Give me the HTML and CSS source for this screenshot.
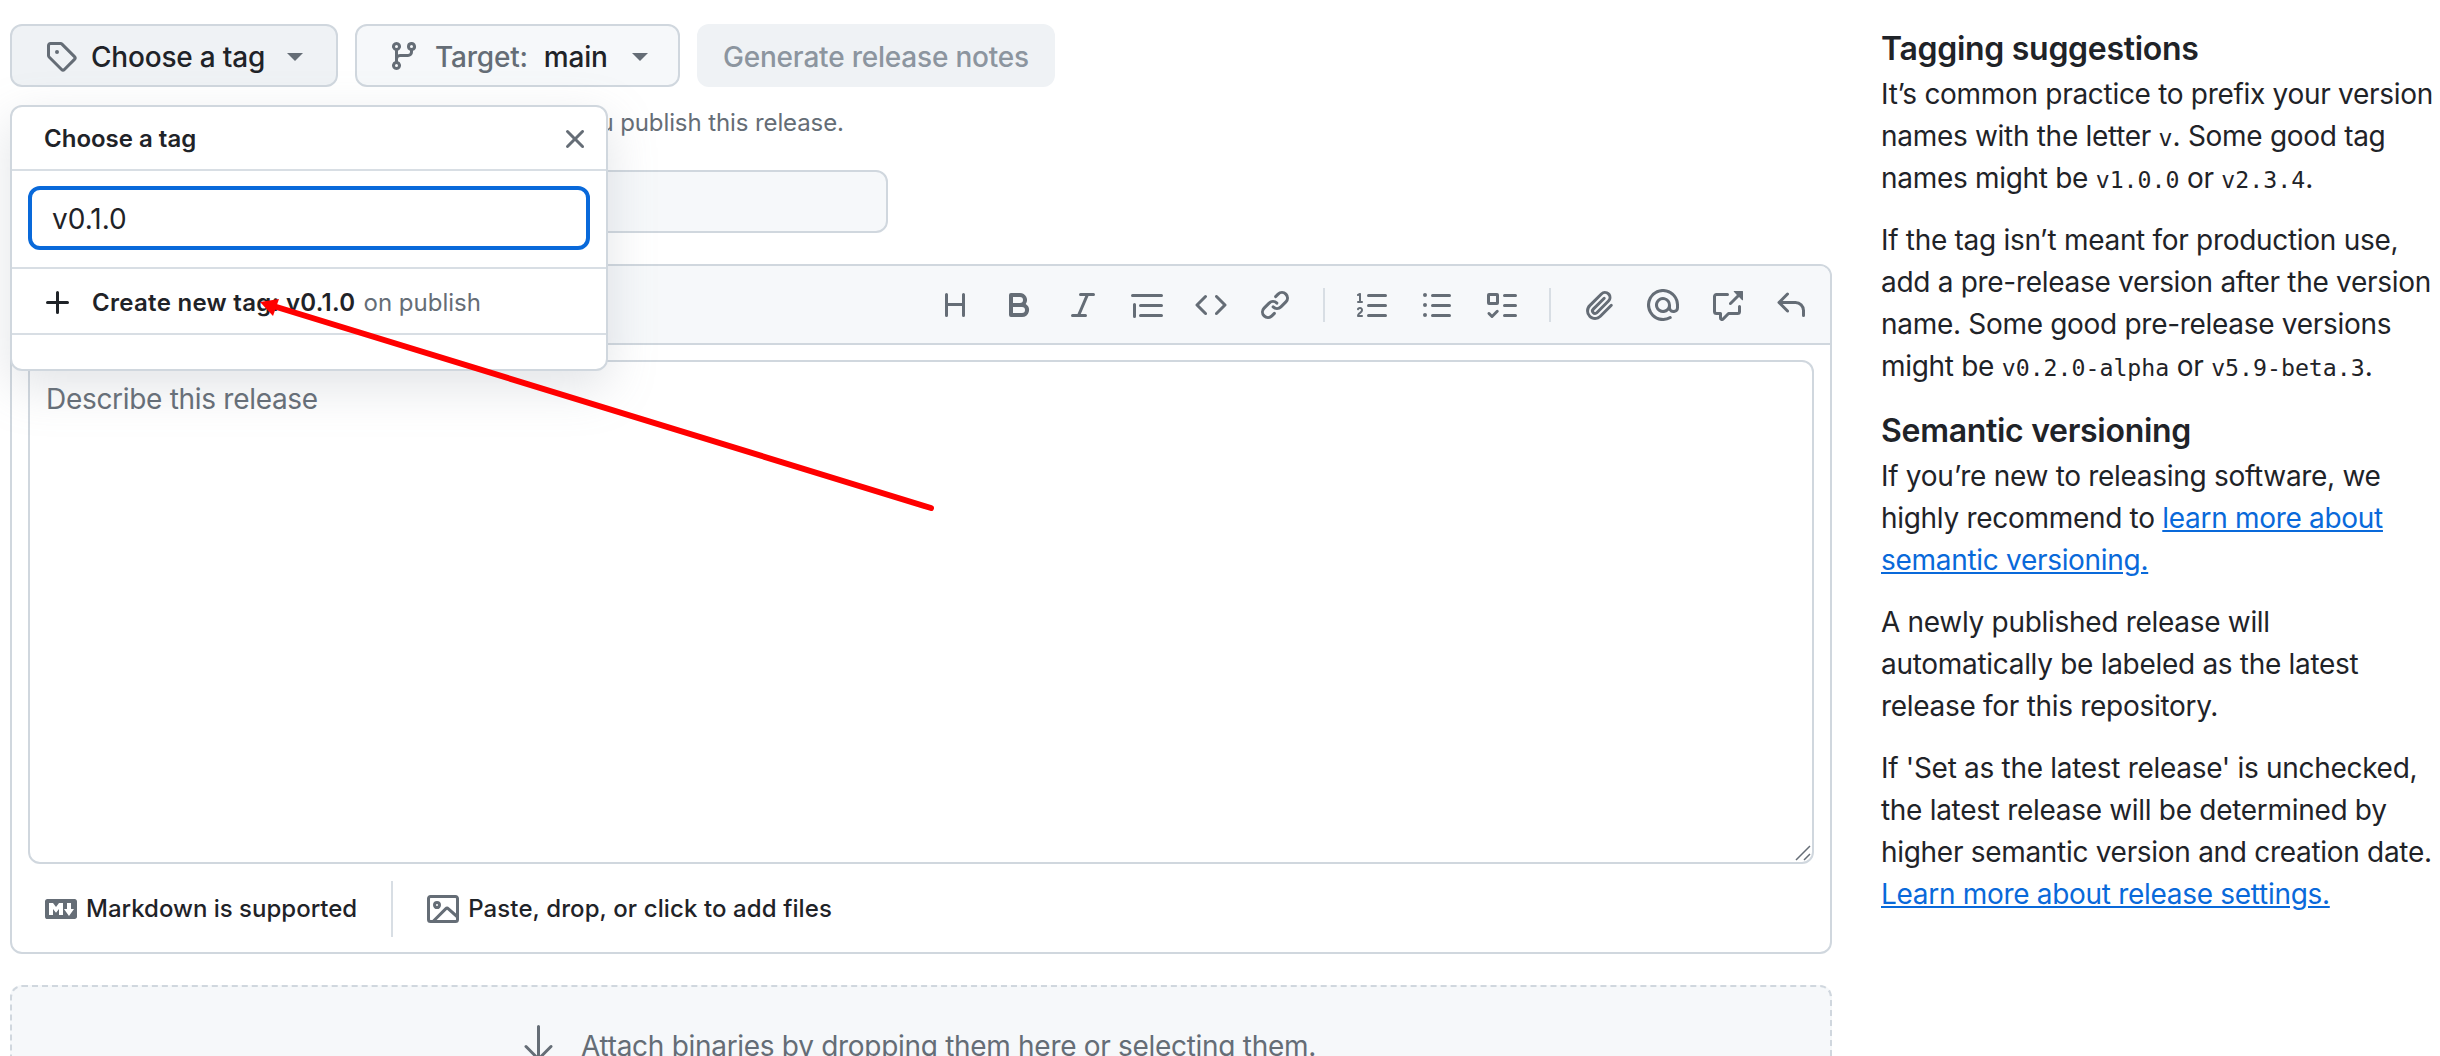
FILE: index.html
```html
<!DOCTYPE html>
<html lang="en">
<head>
    <meta charset="UTF-8">
    <title>New release</title>
    <link rel="stylesheet" href="styles.css">
</head>
<body>
    <div class="page">
        <main class="main">
            <div class="top-row">
                <button class="btn btn-open">
                    <svg class="icon tag-icon" viewBox="0 0 16 16"><path d="M1 7.775V2.75C1 1.784 1.784 1 2.75 1h5.025c.464 0 .91.184 1.238.513l6.25 6.25a1.75 1.75 0 0 1 0 2.474l-5.026 5.026a1.75 1.75 0 0 1-2.474 0l-6.25-6.25A1.752 1.752 0 0 1 1 7.775Zm1.5 0c0 .066.026.13.073.177l6.25 6.25a.25.25 0 0 0 .354 0l5.025-5.025a.25.25 0 0 0 0-.354l-6.25-6.25a.25.25 0 0 0-.177-.073H2.75a.25.25 0 0 0-.25.25ZM6 5a1 1 0 1 1 0 2 1 1 0 0 1 0-2Z"/></svg>
                    <span class="btn-text">Choose a tag</span>
                    <span class="caret"></span>
                </button>
                <button class="btn btn-target">
                    <svg class="icon" viewBox="0 0 16 16"><path d="M9.5 3.25a2.25 2.25 0 1 1 3 2.122V6A2.5 2.5 0 0 1 10 8.5H6a1 1 0 0 0-1 1v1.128a2.251 2.251 0 1 1-1.5 0V5.372a2.25 2.25 0 1 1 1.5 0v1.836A2.493 2.493 0 0 1 6 7h4a1 1 0 0 0 1-1v-.628A2.25 2.25 0 0 1 9.5 3.25Zm-6 0a.75.75 0 1 0 1.5 0 .75.75 0 0 0-1.5 0Zm8.25-.75a.75.75 0 1 0 0 1.5.75.75 0 0 0 0-1.5ZM4.25 12a.75.75 0 1 0 0 1.5.75.75 0 0 0 0-1.5Z"/></svg>
                    <span class="muted-label">Target:</span>
                    <span class="btn-text">main</span>
                    <span class="caret"></span>
                </button>
                <button class="btn btn-disabled">Generate release notes</button>
            </div>

            <p class="hint">Choose an existing tag, or create a new tag when you publish this release.</p>

            <div class="title-input"></div>

            <div class="editor">
                <div class="toolbar">
                    <svg class="icon" viewBox="0 0 16 16"><path d="M3.75 2a.75.75 0 0 1 .75.75V7h7V2.75a.75.75 0 0 1 1.5 0v10.5a.75.75 0 0 1-1.5 0V8.5h-7v4.75a.75.75 0 0 1-1.5 0V2.75A.75.75 0 0 1 3.75 2Z"/></svg>
                    <svg class="icon" viewBox="0 0 16 16"><path d="M4 2h4.5a3.501 3.501 0 0 1 2.852 5.53A3.499 3.499 0 0 1 9.5 14H4a1 1 0 0 1-1-1V3a1 1 0 0 1 1-1Zm1 7v3h4.5a1.5 1.5 0 0 0 0-3Zm3.5-2a1.5 1.5 0 0 0 0-3H5v3Z"/></svg>
                    <svg class="icon" viewBox="0 0 16 16"><path d="M6 2.75A.75.75 0 0 1 6.75 2h6.5a.75.75 0 0 1 0 1.5h-2.505l-3.858 9H9.25a.75.75 0 0 1 0 1.5h-6.5a.75.75 0 0 1 0-1.5h2.505l3.858-9H6.75A.75.75 0 0 1 6 2.75Z"/></svg>
                    <svg class="icon" viewBox="0 0 16 16"><path d="M.75 2.5h14.5a.75.75 0 0 1 0 1.5H.75a.75.75 0 0 1 0-1.5Zm4 5h10.5a.75.75 0 0 1 0 1.5H4.75a.75.75 0 0 1 0-1.5Zm0 5h10.5a.75.75 0 0 1 0 1.5H4.75a.75.75 0 0 1 0-1.5ZM2.5 7.75v6a.75.75 0 0 1-1.5 0v-6a.75.75 0 0 1 1.5 0Z"/></svg>
                    <svg class="icon" viewBox="0 0 16 16"><path d="m11.28 3.22 4.25 4.25a.75.75 0 0 1 0 1.06l-4.25 4.25a.749.749 0 0 1-1.275-.326.749.749 0 0 1 .215-.734L13.94 8l-3.72-3.72a.749.749 0 0 1 .326-1.275.749.749 0 0 1 .734.215Zm-6.56 0a.751.751 0 0 1 1.042.018.751.751 0 0 1 .018 1.042L2.06 8l3.72 3.72a.749.749 0 0 1-.326 1.275.749.749 0 0 1-.734-.215L.47 8.53a.75.75 0 0 1 0-1.06Z"/></svg>
                    <svg class="icon" viewBox="0 0 16 16"><path d="m7.775 3.275 1.25-1.25a3.5 3.5 0 1 1 4.95 4.95l-2.5 2.5a3.5 3.5 0 0 1-4.95 0 .751.751 0 0 1 .018-1.042.751.751 0 0 1 1.042-.018 1.998 1.998 0 0 0 2.83 0l2.5-2.5a2.002 2.002 0 0 0-2.83-2.83l-1.25 1.25a.751.751 0 0 1-1.042-.018.751.751 0 0 1-.018-1.042Zm-4.69 9.64a1.998 1.998 0 0 0 2.83 0l1.25-1.25a.751.751 0 0 1 1.042.018.751.751 0 0 1 .018 1.042l-1.25 1.25a3.5 3.5 0 1 1-4.95-4.95l2.5-2.5a3.5 3.5 0 0 1 4.95 0 .751.751 0 0 1-.018 1.042.751.751 0 0 1-1.042.018 1.998 1.998 0 0 0-2.83 0l-2.5 2.5a1.998 1.998 0 0 0 0 2.83Z"/></svg>
                    <span class="toolbar-sep"></span>
                    <svg class="icon" viewBox="0 0 16 16"><path d="M5 3.25a.75.75 0 0 1 .75-.75h8.5a.75.75 0 0 1 0 1.5h-8.5A.75.75 0 0 1 5 3.25Zm0 5a.75.75 0 0 1 .75-.75h8.5a.75.75 0 0 1 0 1.5h-8.5A.75.75 0 0 1 5 8.25Zm0 5a.75.75 0 0 1 .75-.75h8.5a.75.75 0 0 1 0 1.5h-8.5a.75.75 0 0 1-.75-.75ZM.924 10.32a.5.5 0 0 1-.851-.525l.001-.001.001-.002.002-.004.007-.011c.097-.144.215-.273.348-.384.228-.19.588-.392 1.068-.392.468 0 .858.181 1.126.484.259.294.377.673.377 1.038 0 .987-.686 1.495-1.156 1.845l-.047.035c-.303.225-.522.4-.654.597h1.357a.5.5 0 0 1 0 1H.5a.5.5 0 0 1-.5-.5c0-1.005.692-1.52 1.167-1.875l.035-.025c.531-.396.8-.625.8-1.078a.57.57 0 0 0-.128-.376C1.806 10.068 1.695 10 1.5 10a.658.658 0 0 0-.429.163.835.835 0 0 0-.144.153ZM2.003 2.5V6h.503a.5.5 0 0 1 0 1H.5a.5.5 0 0 1 0-1h.503V3.308l-.28.14a.5.5 0 0 1-.446-.895l1.003-.5a.5.5 0 0 1 .723.447Z"/></svg>
                    <svg class="icon" viewBox="0 0 16 16"><path d="M5.75 2.5h8.5a.75.75 0 0 1 0 1.5h-8.5a.75.75 0 0 1 0-1.5Zm0 5h8.5a.75.75 0 0 1 0 1.5h-8.5a.75.75 0 0 1 0-1.5Zm0 5h8.5a.75.75 0 0 1 0 1.5h-8.5a.75.75 0 0 1 0-1.5ZM2 14a1 1 0 1 1 0-2 1 1 0 0 1 0 2Zm1-6a1 1 0 1 1-2 0 1 1 0 0 1 2 0ZM2 4a1 1 0 1 1 0-2 1 1 0 0 1 0 2Z"/></svg>
                    <svg class="icon" viewBox="0 0 16 16"><path d="M2 2h4a1 1 0 0 1 1 1v4a1 1 0 0 1-1 1H2a1 1 0 0 1-1-1V3a1 1 0 0 1 1-1Zm4.655 8.595a.75.75 0 0 1 0 1.06L4.03 14.28a.75.75 0 0 1-1.06 0l-1.5-1.5a.749.749 0 0 1 .326-1.275.749.749 0 0 1 .734.215l.97.97 2.095-2.095a.75.75 0 0 1 1.06 0ZM9.75 2.5h5.5a.75.75 0 0 1 0 1.5h-5.5a.75.75 0 0 1 0-1.5Zm0 5h5.5a.75.75 0 0 1 0 1.5h-5.5a.75.75 0 0 1 0-1.5Zm0 5h5.5a.75.75 0 0 1 0 1.5h-5.5a.75.75 0 0 1 0-1.5Zm-7.25-9v3h3v-3Z"/></svg>
                    <span class="toolbar-sep"></span>
                    <svg class="icon" viewBox="0 0 16 16"><path d="M12.212 3.02a1.753 1.753 0 0 0-2.478.003l-5.83 5.83a3.007 3.007 0 0 0-.88 2.127c0 .795.315 1.551.88 2.116.567.567 1.333.89 2.126.89.79 0 1.548-.321 2.116-.89l5.48-5.48a.75.75 0 0 1 1.061 1.06l-5.48 5.48a4.492 4.492 0 0 1-3.177 1.33c-1.2 0-2.345-.487-3.187-1.33a4.483 4.483 0 0 1-1.32-3.177c0-1.195.475-2.341 1.32-3.186l5.83-5.83a3.25 3.25 0 0 1 5.553 2.297c0 .863-.343 1.691-.953 2.301L7.439 12.39c-.375.377-.884.59-1.416.593a1.998 1.998 0 0 1-1.412-.593 1.992 1.992 0 0 1 0-2.828l5.48-5.48a.751.751 0 0 1 1.042.018.751.751 0 0 1 .018 1.042l-5.48 5.48a.492.492 0 0 0 0 .707.499.499 0 0 0 .352.154.51.51 0 0 0 .356-.154l5.833-5.827a1.755 1.755 0 0 0 0-2.481Z"/></svg>
                    <svg class="icon" viewBox="0 0 16 16"><path d="M4.75 2.37a6.501 6.501 0 0 0 6.5 11.26.75.75 0 0 1 .75 1.298A7.999 7.999 0 0 1 .989 4.148 8 8 0 0 1 16 7.75v1.5a2.75 2.75 0 0 1-5.072 1.475 3.999 3.999 0 0 1-6.65-4.19A4 4 0 0 1 12 8v1.25a1.25 1.25 0 0 0 2.5 0V7.867a6.5 6.5 0 0 0-9.75-5.496ZM10.5 8a2.5 2.5 0 1 0-5 0 2.5 2.5 0 0 0 5 0Z"/></svg>
                    <svg class="icon" viewBox="0 0 16 16"><path d="M2.75 3.5a.25.25 0 0 0-.25.25v7.5c0 .138.112.25.25.25h2a.75.75 0 0 1 .75.75v2.19l2.72-2.72a.747.747 0 0 1 .53-.22h4.5a.25.25 0 0 0 .25-.25v-2.5a.75.75 0 0 1 1.5 0v2.5A1.75 1.75 0 0 1 13.25 13H9.06l-2.573 2.573A1.458 1.458 0 0 1 4 14.543V13H2.75A1.75 1.75 0 0 1 1 11.25v-7.5C1 2.784 1.784 2 2.75 2h5.5a.75.75 0 0 1 0 1.5ZM16 1.25v4.146a.25.25 0 0 1-.427.177L14.03 4.03l-3.75 3.75a.749.749 0 0 1-1.275-.326.749.749 0 0 1 .215-.734l3.75-3.75-1.543-1.543A.25.25 0 0 1 11.604 1h4.146a.25.25 0 0 1 .25.25Z"/></svg>
                    <svg class="icon" viewBox="0 0 16 16"><path d="M6.78 1.97a.75.75 0 0 1 0 1.06L3.81 6h6.44A4.75 4.75 0 0 1 15 10.75v2.5a.75.75 0 0 1-1.5 0v-2.5a3.25 3.25 0 0 0-3.25-3.25H3.81l2.97 2.97a.749.749 0 0 1-.326 1.275.749.749 0 0 1-.734-.215L1.47 7.28a.75.75 0 0 1 0-1.06l4.25-4.25a.75.75 0 0 1 1.06 0Z"/></svg>
                </div>

                <div class="textarea">
                    <span class="placeholder">Describe this release</span>
                    <svg class="resize-grip" viewBox="0 0 16 16"><path d="M1 15 15 1M9 15l6-6" fill="none" stroke="#656d76" stroke-width="1.5"/></svg>
                </div>

                <div class="editor-footer">
                    <span class="footer-item footer-md">
                        <svg class="icon" viewBox="0 0 16 16"><path d="M14.85 3c.63 0 1.15.52 1.14 1.15v7.7c0 .63-.51 1.15-1.15 1.15H1.15C.52 13 0 12.48 0 11.84V4.15C0 3.52.52 3 1.15 3ZM9 11V5H7L5.5 7 4 5H2v6h2V8l1.5 1.92L7 8v3Zm2.99.5L14.5 8H13V5h-2v3H9.5Z"/></svg>
                        Markdown is supported
                    </span>
                    <span class="footer-sep"></span>
                    <span class="footer-item">
                        <svg class="icon" viewBox="0 0 16 16"><path d="M16 13.25A1.75 1.75 0 0 1 14.25 15H1.75A1.75 1.75 0 0 1 0 13.25V2.75C0 1.784.784 1 1.75 1h12.5c.966 0 1.75.784 1.75 1.75ZM1.75 2.5a.25.25 0 0 0-.25.25v10.5c0 .138.112.25.25.25h.94l.03-.03 6.077-6.078a1.75 1.75 0 0 1 2.412-.06L14.5 10.31V2.75a.25.25 0 0 0-.25-.25Zm12.5 11a.25.25 0 0 0 .25-.25v-.917l-4.298-3.889a.25.25 0 0 0-.344.008L4.81 13.5ZM7 6a2 2 0 1 1-3.999.001A2 2 0 0 1 7 6ZM5.5 6a.5.5 0 1 0-1 0 .5.5 0 0 0 1 0Z"/></svg>
                        <span class="paste-text">Paste, drop, or click to add files</span>
                    </span>
                </div>
            </div>

            <div class="dropzone">
                <svg class="icon arrow-icon" viewBox="0 0 24 24"><path d="M4.97 13.22a.75.75 0 0 1 1.06 0L11 18.19V3.75a.75.75 0 0 1 1.5 0v14.44l4.97-4.97a.749.749 0 0 1 1.275.326.749.749 0 0 1-.215.734l-6.25 6.25a.75.75 0 0 1-1.06 0l-6.25-6.25a.75.75 0 0 1 0-1.06Z"/></svg>
                <span class="dropzone-text">Attach binaries by dropping them here or selecting them.</span>
            </div>

            <!-- tag picker, open over the form -->
            <div class="popover">
                <div class="popover-head">
                    <span>Choose a tag</span>
                    <svg class="icon" viewBox="0 0 16 16"><path d="M3.72 3.72a.75.75 0 0 1 1.06 0L8 6.94l3.22-3.22a.749.749 0 0 1 1.275.326.749.749 0 0 1-.215.734L9.06 8l3.22 3.22a.749.749 0 0 1-.326 1.275.749.749 0 0 1-.734-.215L8 9.06l-3.22 3.22a.751.751 0 0 1-1.042-.018.751.751 0 0 1-.018-1.042L6.94 8 3.72 4.78a.75.75 0 0 1 0-1.06Z"/></svg>
                </div>
                <div class="popover-filter">
                    <div class="filter-input">v0.1.0</div>
                </div>
                <div class="popover-item">
                    <svg class="icon plus-icon" viewBox="0 0 16 16"><path d="M7.75 2a.75.75 0 0 1 .75.75V7h4.25a.75.75 0 0 1 0 1.5H8.5v4.25a.75.75 0 0 1-1.5 0V8.5H2.75a.75.75 0 0 1 0-1.5H7V2.75A.75.75 0 0 1 7.75 2Z"/></svg>
                    <span class="item-strong">Create new tag: v0.1.0</span>
                    <span class="item-muted">on publish</span>
                </div>
            </div>
        </main>

        <aside class="side">
            <h3>Tagging suggestions</h3>
            <p>It’s common practice to prefix your version names with the letter <code>v</code>. Some good tag names might be <code>v1.0.0</code> or <code>v2.3.4</code>.</p>
            <p>If the tag isn’t meant for production use, add a pre-release version after the version name. Some good pre-release versions might be <code>v0.2.0-alpha</code> or <code>v5.9-beta.3</code>.</p>
            <h3 class="side-second">Semantic versioning</h3>
            <p>If you’re new to releasing software, we highly recommend to <a href="#">learn more about semantic versioning.</a></p>
            <p>A newly published release will automatically be labeled as the latest release for this repository.</p>
            <p>If 'Set as the latest release' is unchecked, the latest release will be determined by higher semantic version and creation date. <a href="#">Learn more about release settings.</a></p>
        </aside>
    </div>

    <!-- red annotation arrow drawn on top of the screenshot -->
    <svg class="annotation" viewBox="0 0 2440 1056">
        <line x1="931" y1="508" x2="270" y2="305" stroke="#ff0000" stroke-width="6" stroke-linecap="round"/>
        <polygon points="260,302 279,299 273,316" fill="#ff0000"/>
    </svg>
</body>
</html>
```

FILE: styles.css
```css
:root {
    --text: #1f2328;
    --muted: #656d76;
    --border: #d0d7de;
    --border-light: #d8dee4;
    --canvas: #f6f8fa;
    --active: #eff2f5;
    --blue: #0969da;
}

* {
    box-sizing: border-box;
}

html, body {
    height: 100%;
}

body {
    margin: 0;
    background: #fff;
    color: var(--text);
    font-family: Inter, "Liberation Sans", sans-serif;
    font-size: 28px;
    line-height: 42px;
    overflow: hidden;
    position: relative;
}

.page {
    display: flex;
    height: 1056px;
    padding-left: 10px;
    overflow: hidden;
}

.main {
    position: relative;
    flex: 0 0 1822px;
    padding-top: 24px;
}

.icon {
    flex: none;
    width: 32px;
    height: 32px;
    fill: var(--muted);
}

/* top buttons */
.top-row {
    display: flex;
    gap: 17px;
}

.btn {
    display: flex;
    align-items: center;
    height: 63px;
    padding: 2px 0 0;
    border: 2px solid var(--border);
    border-radius: 12px;
    background: var(--canvas);
    color: var(--text);
    font: 500 28px/40px Inter, "Liberation Sans", sans-serif;
    letter-spacing: -0.2px;
}

.btn .icon {
    margin-top: -2px;
}

.btn-open {
    width: 328px;
    padding-left: 33px;
    background: var(--active);
}

.btn-open .btn-text {
    margin-left: 14px;
}

.btn-open .caret {
    margin-left: 22px;
}

.btn-target {
    width: 325px;
    padding-left: 31px;
}

.btn-target .muted-label {
    margin-left: 15px;
    color: var(--muted);
}

.btn-target .btn-text {
    margin-left: 16px;
}

.btn-target .caret {
    margin-left: 24px;
}

.btn-disabled {
    width: 358px;
    justify-content: center;
    border-color: transparent;
    background: var(--active);
    color: #8c959f;
}

.caret {
    width: 0;
    height: 0;
    border-style: solid;
    border-width: 8px 8px 0;
    border-color: var(--muted) transparent transparent;
}

.hint {
    margin: 18px 0 0;
    color: var(--muted);
    font-size: 24px;
    line-height: 36px;
    letter-spacing: -0.1px;
}

.title-input {
    width: 878px;
    height: 63px;
    margin-top: 29px;
    border: 2px solid var(--border);
    border-radius: 12px;
    background: var(--canvas);
}

/* editor card */
.editor {
    height: 690px;
    margin-top: 31px;
    border: 2px solid var(--border);
    border-radius: 12px;
    overflow: hidden;
}

.toolbar {
    display: flex;
    align-items: center;
    justify-content: flex-end;
    gap: 32px;
    height: 79px;
    padding-right: 23px;
    border-bottom: 2px solid var(--border);
    background: var(--canvas);
}

.toolbar-sep {
    width: 2px;
    height: 34px;
    background: var(--border-light);
}

.textarea {
    position: relative;
    height: 504px;
    margin: 15px 16px 0;
    padding: 16px 16px 0;
    border: 2px solid var(--border);
    border-radius: 12px;
    color: var(--muted);
    letter-spacing: -0.3px;
}

.resize-grip {
    position: absolute;
    right: 1px;
    bottom: 1px;
    width: 16px;
    height: 16px;
}

.editor-footer {
    display: flex;
    align-items: center;
    height: 84px;
    padding: 6px 0 0 33px;
    font-size: 24px;
    font-weight: 500;
}

.footer-item {
    display: flex;
    align-items: center;
    gap: 9px;
}

.paste-text {
    letter-spacing: 0.1px;
}

.footer-sep {
    width: 2px;
    height: 56px;
    margin: 0 34px;
    background: var(--border-light);
}

.dropzone {
    display: flex;
    justify-content: center;
    height: 200px;
    margin-top: 31px;
    padding: 32px 11px 0 0;
    border: 2px dashed var(--border);
    border-radius: 12px;
    background: var(--canvas);
    color: var(--muted);
}

.dropzone-text {
    margin-top: 6px;
    letter-spacing: -0.3px;
}

.arrow-icon {
    width: 48px;
    height: 48px;
    margin-right: 18px;
}

/* tag picker */
.popover {
    position: absolute;
    left: 0;
    top: 105px;
    width: 598px;
    height: 266px;
    border: 2px solid var(--border);
    border-radius: 12px;
    background: #fff;
    box-shadow: 0 16px 48px rgba(140, 149, 159, 0.25);
}

.popover-head {
    display: flex;
    align-items: center;
    justify-content: space-between;
    height: 64px;
    padding: 2px 15px 0 32px;
    border-bottom: 2px solid var(--border-light);
    font-size: 24px;
    font-weight: 600;
}

.popover-filter {
    height: 98px;
    padding: 15px 16px 0;
    border-bottom: 2px solid var(--border-light);
}

.filter-input {
    height: 64px;
    padding: 0 20px;
    border: 4px solid var(--blue);
    border-radius: 12px;
    line-height: 58px;
}

.popover-item {
    display: flex;
    align-items: center;
    height: 66px;
    padding: 3px 0 0 30px;
    border-bottom: 2px solid var(--border-light);
    font-size: 24px;
}

.plus-icon {
    fill: var(--text);
    margin-right: 18px;
}

.item-strong {
    font-weight: 600;
    letter-spacing: 0.3px;
}

.item-muted {
    margin-left: 8px;
    color: var(--muted);
}

/* right column */
.side {
    flex: 0 0 559px;
    margin-left: 49px;
    padding-top: 29px;
    letter-spacing: -0.3px;
}

.side h3 {
    margin: 0 0 4px;
    font-size: 32px;
    font-weight: 600;
    line-height: 40px;
}

.side .side-second {
    margin-top: 24px;
}

.side p {
    margin: 0 0 20px;
}

.side code {
    font-family: "DejaVu Sans Mono", "Liberation Mono", monospace;
    font-size: 23.2px;
    line-height: 1;
    letter-spacing: 0;
}

.side a {
    color: var(--blue);
}

.annotation {
    position: absolute;
    left: 0;
    top: 0;
    width: 2440px;
    height: 1056px;
    pointer-events: none;
}
```
